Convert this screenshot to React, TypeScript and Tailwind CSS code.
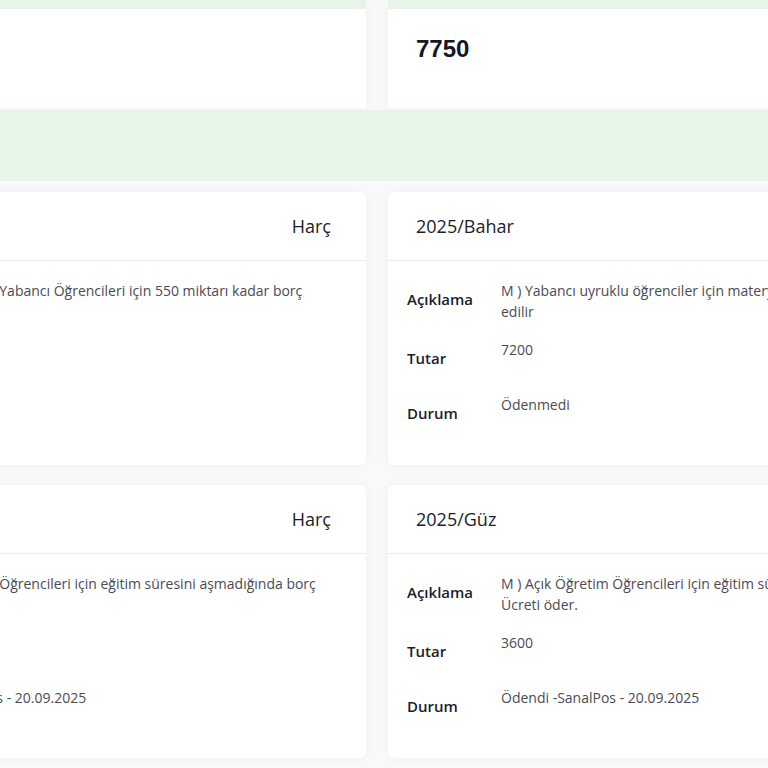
const font = { fontFamily: '"Open Sans", "Liberation Sans", sans-serif' };

interface Row {
  label: string;
  lines: string[];
}

interface CardProps {
  title?: string;
  type?: string;
  rows: Row[];
}

function FeeCard({ title, type, rows }: CardProps) {
  return (
    <div className="bg-white rounded-md overflow-hidden shadow-[0_0_12px_rgba(0,0,0,0.04)]">
      <div className="h-[69px] flex items-center justify-between pl-7 pr-[35px] border-b border-[#ececf0]">
        <span className="text-[18px] font-medium text-[#1c1c2b]">{title}</span>
        <span className="text-[18px] font-medium text-[#1c1c2b]">{type}</span>
      </div>
      <div className="pt-[19px] pb-[16px] pl-[19px] pr-6">
        {rows.map((row) => (
          <div key={row.label} className="flex items-start">
            <div className="w-[94px] shrink-0 pt-[9px] pb-[26px] text-[15px] leading-[20px] font-semibold text-[#1c1c2b]">
              {row.label}
            </div>
            <div className="min-w-0 pb-[17px] text-[14px] leading-[21px] text-[#4a4a55]">
              {row.lines.map((l, i) => (
                <div key={i} className="whitespace-nowrap">
                  {l}
                </div>
              ))}
            </div>
          </div>
        ))}
      </div>
    </div>
  );
}

export default function App() {
  return (
    <div className="w-[768px] h-[768px] overflow-hidden bg-[#f9f9fb]" style={font}>
      <div className="ml-[-225px] w-[1204px]">
        {/* Totals */}
        <div className="grid grid-cols-[591px_591px] gap-x-[22px]">
          <div className="bg-white shadow-[0_0_12px_rgba(0,0,0,0.04)]">
            <div className="h-[9px] bg-[#e8f3ea]" />
            <div className="h-[99px]" />
          </div>
          <div className="bg-white shadow-[0_0_12px_rgba(0,0,0,0.04)]">
            <div className="h-[9px] bg-[#e8f3ea]" />
            <div className="h-[99px] pl-7 pt-[23px]">
              <span
                className="text-[24px] leading-[34px] font-bold text-[#161625]"
                style={{ fontFamily: '"Liberation Sans", Arial, sans-serif' }}
              >
                7750
              </span>
            </div>
          </div>
        </div>

        {/* Info band */}
        <div className="mt-[2px] h-[71px] bg-[#e8f5e9]" />

        {/* Fee cards */}
        <div className="mt-[11px] grid grid-cols-[591px_591px] gap-x-[22px] gap-y-[20px]">
          <FeeCard
            type="Harç"
            rows={[
              { label: 'Açıklama', lines: ['M ) Açık Öğretim Yabancı Öğrencileri için 550 miktarı kadar borç', 'edilir'] },
              { label: 'Tutar', lines: ['550'] },
              { label: 'Durum', lines: ['Ödenmedi'] },
            ]}
          />
          <FeeCard
            title="2025/Bahar"
            type="Harç"
            rows={[
              { label: 'Açıklama', lines: ['M ) Yabancı uyruklu öğrenciler için materyal ücreti olarak borç tahakkuk', 'edilir'] },
              { label: 'Tutar', lines: ['7200'] },
              { label: 'Durum', lines: ['Ödenmedi'] },
            ]}
          />
          <FeeCard
            type="Harç"
            rows={[
              { label: 'Açıklama', lines: ['M ) Açık Öğretim Öğrencileri için eğitim süresini aşmadığında borç', 'Ücreti öder.'] },
              { label: 'Tutar', lines: ['3600'] },
              { label: 'Durum', lines: ['Ödendi -SanalPos - 20.09.2025'] },
            ]}
          />
          <FeeCard
            title="2025/Güz"
            type="Harç"
            rows={[
              { label: 'Açıklama', lines: ['M ) Açık Öğretim Öğrencileri için eğitim süresini aşmadığında borç', 'Ücreti öder.'] },
              { label: 'Tutar', lines: ['3600'] },
              { label: 'Durum', lines: ['Ödendi -SanalPos - 20.09.2025'] },
            ]}
          />
        </div>
      </div>
    </div>
  );
}
